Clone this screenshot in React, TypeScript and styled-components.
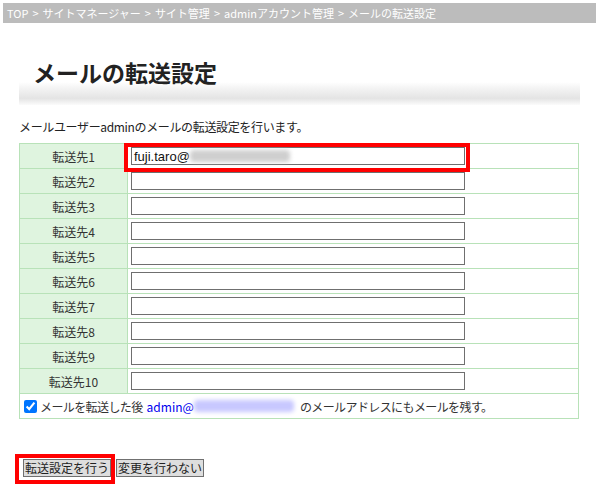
import styled, { createGlobalStyle } from "styled-components";

const GlobalStyle = createGlobalStyle`
  body {
    margin: 0;
    background: #fff;
    font-family: "Noto Sans CJK JP", "Noto Sans", sans-serif;
    color: #222;
  }
`;

const Page = styled.div`
  position: relative;
  width: 599px;
  height: 491px;
  overflow: hidden;
`;

const Breadcrumb = styled.div`
  margin: 3px 3px 0 3px;
  height: 20px;
  line-height: 20px;
  background: #bcbcbc;
  color: #fff;
  font-size: 11px;
  padding-left: 4px;
  white-space: nowrap;
`;

const Sep = styled.span`
  margin: 0 4px;
`;

const TitleBlock = styled.div`
  margin: 0 0 0 19px;
  width: 561px;
  height: 82px;
  padding-top: 34px;
  box-sizing: border-box;
  background: linear-gradient(
    to bottom,
    #fff 0%,
    #fff 72%,
    #f3f3f3 80%,
    #e4e4e4 92%,
    #fbfbfb 100%
  );
`;

const Title = styled.h1`
  margin: 0 0 0 14px;
  font-size: 23px;
  line-height: 30px;
  font-weight: bold;
  color: #222;
`;

const Lead = styled.p`
  margin: 14px 0 0 19px;
  font-size: 12px;
  line-height: 16px;
  letter-spacing: -0.35px;
`;

const Table = styled.table`
  margin: 8px 0 0 19px;
  width: 560px;
  border-collapse: collapse;
  font-size: 12px;
`;

const LabelCell = styled.th`
  width: 107px;
  height: 24px;
  padding: 0;
  background: #dff4df;
  border: 1px solid #b8e2b8;
  font-weight: normal;
  text-align: center;
  color: #333;
`;

const FieldCell = styled.td`
  padding: 0 0 0 3px;
  border: 1px solid #b8e2b8;
  height: 24px;
`;

const OptionCell = styled.td`
  padding: 0 0 0 4px;
  border: 1px solid #b8e2b8;
  height: 24px;
  color: #333;
  letter-spacing: -0.6px;
`;

const TextInput = styled.input`
  display: block;
  width: 334px;
  height: 18px;
  box-sizing: border-box;
  border: 1px solid #6f6f6f;
  padding: 0 2px;
  font-size: 13px;
  font-family: "Liberation Sans", Arial, sans-serif;
  color: #111;
  background: #fff;
`;

const InputWrap = styled.div`
  position: relative;
  width: 334px;
`;

const Blur = styled.span<{ $color: string; $width: number }>`
  display: inline-block;
  width: ${(p) => p.$width}px;
  height: 12px;
  vertical-align: middle;
  background: ${(p) => p.$color};
  filter: blur(2px);
  border-radius: 4px;
`;

const InputOverlay = styled.div`
  position: absolute;
  left: 3px;
  top: 0;
  height: 18px;
  display: flex;
  align-items: center;
  font-size: 13px;
  font-family: "Liberation Sans", Arial, sans-serif;
  color: #111;
  pointer-events: none;
`;

const CheckLabel = styled.label`
  display: flex;
  align-items: center;
  gap: 3px;
`;

const Check = styled.input`
  margin: 0;
  width: 13px;
  height: 13px;
`;

const Link = styled.span`
  color: #0000ee;
  margin: 0 3px 0 1px;
  display: inline-flex;
  align-items: center;
  letter-spacing: 0;
`;

const Buttons = styled.div`
  margin: 40px 0 0 23px;
  display: flex;
  gap: 5px;
`;

const Button = styled.button`
  height: 18px;
  padding: 0 1px;
  font-size: 12px;
  line-height: 16px;
  font-family: "Noto Sans CJK JP", sans-serif;
  color: #222;
  background: #dedede;
  border: 1px solid #707070;
  border-radius: 0;
`;

const Marker = styled.div<{ $l: number; $t: number; $w: number; $h: number }>`
  position: absolute;
  left: ${(p) => p.$l}px;
  top: ${(p) => p.$t}px;
  width: ${(p) => p.$w}px;
  height: ${(p) => p.$h}px;
  border: 4px solid #f00;
  box-sizing: border-box;
  pointer-events: none;
`;

const rows = Array.from({ length: 10 }, (_, i) => i + 1);
const crumbs = ["TOP", "サイトマネージャー", "サイト管理", "adminアカウント管理", "メールの転送設定"];

export default function App() {
  return (
    <Page>
      <GlobalStyle />
      <Breadcrumb>
        {crumbs.map((c, i) => (
          <span key={c}>
            {i > 0 && <Sep>&gt;</Sep>}
            {c}
          </span>
        ))}
      </Breadcrumb>
      <TitleBlock>
        <Title>メールの転送設定</Title>
      </TitleBlock>
      <Lead>メールユーザーadminのメールの転送設定を行います。</Lead>
      <Table>
        <tbody>
          {rows.map((n) => (
            <tr key={n}>
              <LabelCell>転送先{n}</LabelCell>
              <FieldCell>
                {n === 1 ? (
                  <InputWrap>
                    <TextInput type="text" readOnly />
                    <InputOverlay>
                      fuji.taro@
                      <Blur $color="#cfcfcf" $width={100} />
                    </InputOverlay>
                  </InputWrap>
                ) : (
                  <TextInput type="text" />
                )}
              </FieldCell>
            </tr>
          ))}
          <tr>
            <OptionCell colSpan={2}>
              <CheckLabel>
                <Check type="checkbox" defaultChecked />
                メールを転送した後
                <Link>
                  admin@
                  <Blur $color="#c8c8ff" $width={100} />
                </Link>
                のメールアドレスにもメールを残す。
              </CheckLabel>
            </OptionCell>
          </tr>
        </tbody>
      </Table>
      <Buttons>
        <Button>転送設定を行う</Button>
        <Button>変更を行わない</Button>
      </Buttons>
      <Marker $l={15} $t={454} $w={100} $h={30} />
      <Marker $l={124} $t={143} $w={346} $h={29} />
    </Page>
  );
}
